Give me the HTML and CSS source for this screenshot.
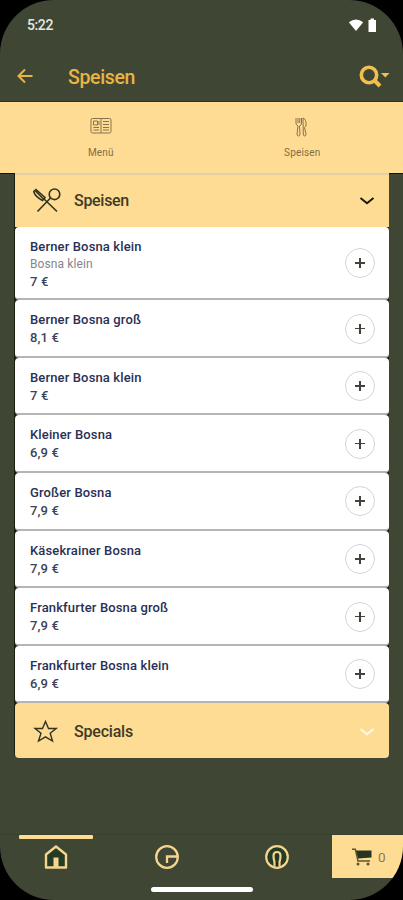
FILE: index.html
```
<!DOCTYPE html>
<html lang="de">
<head>
<meta charset="utf-8">
<title>Speisen</title>
<link rel="stylesheet" href="styles.css">
</head>
<body>
<div class="screen">
  <div class="status"><span class="time">5:22</span>
    <svg width="30" height="16" viewBox="0 0 30 16" fill="#fff"><path d="M.8 4.200Q8 -1.400 15.200 4.200L8 13z"/><path d="M20.500 2h2V.6h3.500V2h2v12h-7.500z"/></svg>
  </div>
  <header class="bar">
    <svg class="back" width="16" height="16" viewBox="0 0 16 16" fill="none" stroke="#e9b444" stroke-width="2"><path d="M15.500 8H2M8 1.500L1.500 8L8 14.500"/></svg>
    <h1>Speisen</h1>
    <svg class="search" width="31" height="24" viewBox="0 0 31 24"><circle cx="10" cy="10" r="7.700" fill="none" stroke="#f0bf50" stroke-width="3.600"/><path d="M15.500 15.500L21 21" stroke="#f0bf50" stroke-width="4"/><path d="M22 8h8.500L26.300 12.500z" fill="#f0bf50"/></svg>
  </header>
  <nav class="tabs">
    <div class="tab">
      <svg width="22" height="18" viewBox="0 0 22 18" fill="none" stroke="#87734a" stroke-width="1"><rect x="1" y="1.500" width="20" height="14.500" rx="1.500"/><path d="M11 1.500V16M3.500 4h4v4h-4zM3.500 10.500H9M3.500 13H9M13 4.500h6M13 7.500h6M13 10.500h6M13 13h6M9 4v4"/></svg>
      <span>Menü</span>
    </div>
    <div class="tab">
      <svg width="22" height="20" viewBox="0 0 22 20" fill="none" stroke="#87734a" stroke-width="1"><path d="M5 1v5q0 2 2 3L6 17q0 2 1.500 2T9 17L8.500 9q2-1 2-3V1M7 1v5M8.800 1v5M12 1q3.500 1 3 8l-1.500 1.500L15 17q0 2-1.300 2T12.300 17z"/></svg>
      <span>Speisen</span>
    </div>
  </nav>
  <main class="list">
    <div class="group first">
      <svg width="30" height="26" viewBox="0 0 30 26" fill="none" stroke="#30331f" stroke-width="1.600"><circle cx="21.500" cy="6.300" r="5.300"/><path d="M17.500 10L4.500 23.500M10.500 10.500L24 23.500M.7 3.500L3 1.500L12 9.500L9.500 12.500Q2 8.500 .7 3.500zM2.500 3l8 8"/></svg>
      <h2>Speisen</h2>
      <svg class="chev" width="16" height="10" viewBox="0 0 16 10" fill="none" stroke="#17190f" stroke-width="2"><path d="M1.500 2L8 7.300L14.500 2"/></svg>
    </div>
    <article class="item tall"><div><h3>Berner Bosna klein</h3><p>Bosna klein</p><b>7 €</b></div><button></button></article>
    <article class="item"><div><h3>Berner Bosna groß</h3><b>8,1 €</b></div><button></button></article>
    <article class="item"><div><h3>Berner Bosna klein</h3><b>7 €</b></div><button></button></article>
    <article class="item"><div><h3>Kleiner Bosna</h3><b>6,9 €</b></div><button></button></article>
    <article class="item"><div><h3>Großer Bosna</h3><b>7,9 €</b></div><button></button></article>
    <article class="item"><div><h3>Käsekrainer Bosna</h3><b>7,9 €</b></div><button></button></article>
    <article class="item"><div><h3>Frankfurter Bosna groß</h3><b>7,9 €</b></div><button></button></article>
    <article class="item"><div><h3>Frankfurter Bosna klein</h3><b>6,9 €</b></div><button></button></article>
    <div class="group last">
      <svg width="30" height="26" viewBox="0 0 30 26" fill="none" stroke="#30331f" stroke-width="1.400"><path d="M12.500 2.500L15.500 9.500H23.200L17.200 14.300L19.500 22L12.500 17.800L5.500 22L8 14.300L2 9.500H9.500z"/></svg>
      <h2>Specials</h2>
      <svg class="chev" width="16" height="10" viewBox="0 0 16 10" fill="none" stroke="#fff8e4" stroke-width="2.200"><path d="M1.500 2L8 7.300L14.500 2"/></svg>
    </div>
  </main>
  <footer class="nav">
    <div class="link active"><svg width="26" height="26" viewBox="0 0 26 26"><path d="M3 10.500L13 2.500L23 10.500V23.500H3z" fill="#243c25" stroke="#f5d58e" stroke-width="2.400" stroke-linejoin="round"/><path d="M10.500 13.500h5V23h-5z" fill="#f5d58e"/></svg></div>
    <div class="link"><svg width="26" height="26" viewBox="0 0 26 26" fill="none" stroke="#f5d58e" stroke-width="2.300"><circle cx="13" cy="13" r="10.800"/><path d="M23 12.500H13v6.500"/></svg></div>
    <div class="link"><svg width="26" height="26" viewBox="0 0 26 26" fill="none" stroke="#f5d58e" stroke-width="2.200"><circle cx="13" cy="13" r="10.800" fill="#243c25"/><path d="M10.500 22.500V18Q9.500 15 9.500 12Q9.500 8 13 8T16.500 12Q16.500 15 15.500 18V22.500"/><path d="M13 18v4" stroke="#202916"/></svg></div>
    <div class="cart"><svg width="20" height="18" viewBox="0 0 20 18"><path d="M3.500 2.500H19.500V9.500L6 10.500z" fill="#27351f"/><path d="M0 1.200h3.300L6 13H18" fill="none" stroke="#5c5435" stroke-width="1.500"/><circle cx="6" cy="16" r="1.500" fill="#5c5435"/><circle cx="16" cy="16" r="1.500" fill="#5c5435"/></svg><span>0</span></div>
  </footer>
  <div class="pill"></div>
</div>
</body>
</html>
```
FILE: styles.css
```
*{box-sizing:border-box}
body{margin:0;background:#000;font-family:Roboto,sans-serif}
h1,h2,h3,p{margin:0}
svg{display:block;flex:none}
.screen{position:relative;width:403px;height:900px;background:#3f4633;border-radius:54px;overflow:hidden;display:flex;flex-direction:column}
.status{height:51px;padding:0 25px 2px 27px;display:flex;align-items:center;justify-content:space-between}
.status svg{margin-top:2px}
.time{color:#e6e7e2;font-size:14px;font-weight:500;letter-spacing:-.4px}
.bar{height:51px;display:flex;align-items:center;padding:1px 13px 0 17px;border-bottom:1px solid #2b3322}
.back{margin-top:-2px}
.bar h1{margin-left:35px;padding-top:2px;font-size:19.500px;font-weight:500;color:#e9b444;flex:1;letter-spacing:-.35px}
.tabs{height:72px;background:#ffdc94;border-bottom:1px solid #10150a;display:flex;flex:none}
.tab{flex:1;display:flex;flex-direction:column;align-items:center;justify-content:space-between;padding:15px 0 14px;font-size:10px;line-height:12px;letter-spacing:.15px;color:#806d46}
.list{margin:-1px 14px 0;background:#17200f;border-radius:0 0 5px 5px}
.group{background:#ffdc94;display:flex;align-items:center;padding:0 14px 0 18px;margin-left:1px}
.group h2{font-size:16px;font-weight:500;color:#3d3b27;margin-left:11px;flex:1;letter-spacing:-.3px}
.first{height:54px;border-top:2px solid #e2cfa6}
.first svg,.first h2{margin-top:-1px}
.last{height:55px;border-radius:4px;padding-top:2px}
.last h2{letter-spacing:-.2px}
.item{height:57.650px;margin-left:1px;background:#fff;border-bottom:2px solid #b5b6b4;border-radius:4px;display:flex;align-items:center;justify-content:space-between;padding:1.500px 14px 0 15px;color:#2a3053}
.item>div{padding-top:1px}
.tall{height:73px}
.tall>div{padding-top:2px}
.item h3,.item b{display:block;font-size:13px;line-height:18px;font-weight:500;letter-spacing:.14px}
.item b{color:#3d4255}
.item p{font-size:12px;line-height:17px;letter-spacing:.1px;color:#85858b}
.item button{position:relative;width:30px;height:30px;border:1px solid #d4d4d4;border-radius:50%;background:#fff;padding:0}
.item button::before,.item button::after{content:"";position:absolute;background:#42443c;left:9px;top:13px;width:10px;height:1.500px}
.item button::after{left:13px;top:9px;width:1.500px;height:10px}
.nav{margin-top:auto;height:66px;display:flex;border-top:1px solid #394030;flex:none}
.link{width:110.700px;display:flex;justify-content:center;padding-top:9px;position:relative}
.link svg{margin-left:1px}
.active::before{content:"";position:absolute;left:19px;top:0;width:74px;height:4px;border-radius:1px;background:#ffdc94}
.cart{width:71px;height:43px;background:#ffdc94;display:flex;align-items:center;padding-left:20px;gap:6px;font-size:13.500px;color:#8d7950}
.pill{position:absolute;left:151px;bottom:8px;width:102px;height:5px;border-radius:3px;background:#fff}
```
